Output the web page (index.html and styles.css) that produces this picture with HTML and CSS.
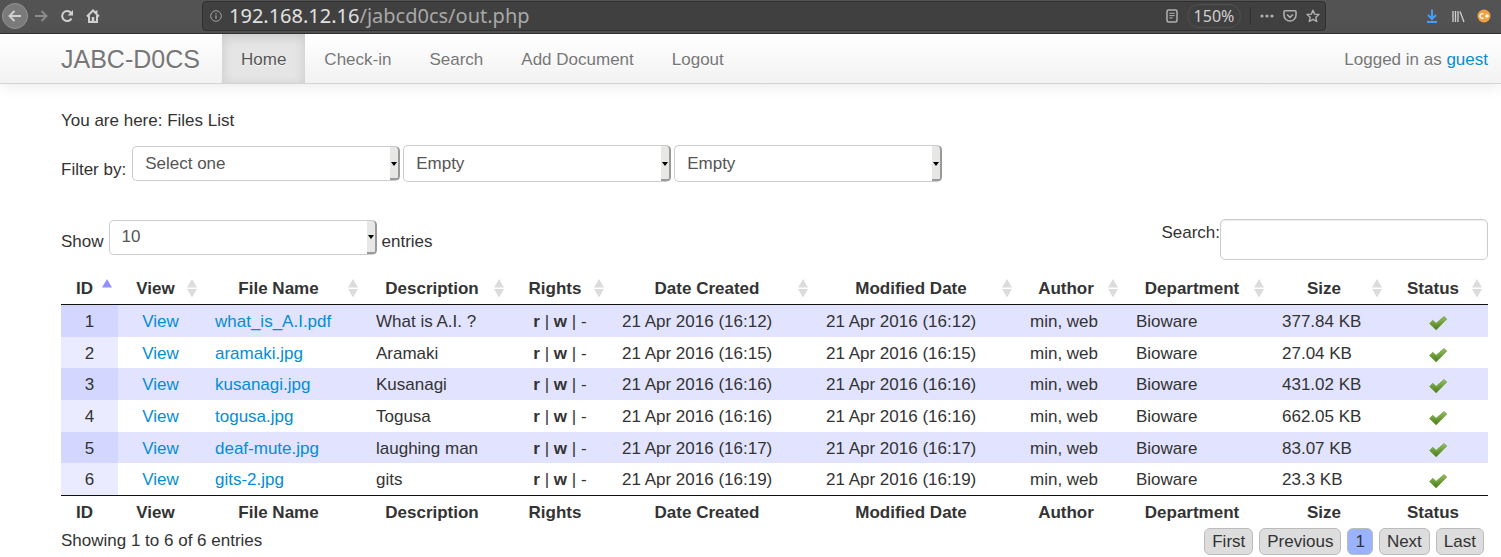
FILE: index.html
```html
<!DOCTYPE html>
<html lang="en">
<head>
<meta charset="utf-8">
<title>JABC-D0CS - Files List</title>
<link rel="stylesheet" href="styles.css">
</head>
<body>
<svg class="defs" aria-hidden="true">
  <defs>
    <linearGradient id="tick-fill" x1="0" y1="0" x2="0" y2="1">
      <stop offset="0" stop-color="#95bf60"/>
      <stop offset="1" stop-color="#487c14"/>
    </linearGradient>
    <symbol id="sort" viewBox="0 0 10 20"><path d="M5 1l5 8.500H0zM5 19.500l5-8.500H0z"/></symbol>
    <symbol id="sort-up" viewBox="0 0 10 20"><path d="M5 1l5 8.500H0z"/></symbol>
    <symbol id="tick" viewBox="0 0 20 16"><path d="M1.500 8.500l3.300-3.200 3.300 3L16 1.500l2.800 2.500L8.200 15z" fill="url(#tick-fill)" stroke="#7ba64a" stroke-width=".8" stroke-linejoin="round"/></symbol>
  </defs>
</svg>

<header class="browser">
  <div class="browser-nav">
    <button class="tool back" aria-label="Back"><svg width="16" height="16" viewBox="0 0 16 16"><path d="M14 8H3M7.500 3L2.500 8l5 5"/></svg></button>
    <button class="tool forward" aria-label="Forward"><svg width="16" height="16" viewBox="0 0 16 16"><path d="M2 8h11M8.500 3l5 5-5 5"/></svg></button>
    <button class="tool" aria-label="Reload"><svg width="14" height="14" viewBox="0 0 14 14"><path d="M11.500 9.500A5 5 0 1 1 11 3.800"/><path d="M13 1v5.500H7.500z" fill="currentColor" stroke="none"/></svg></button>
    <button class="tool" aria-label="Home page"><svg width="14" height="14" viewBox="0 0 14 14"><path d="M1 7.500L7 1.500l6 6M3 6.500V13h8V6.500M10.500 4V1.500"/><path d="M5.700 8h2.600v5H5.700z" fill="currentColor" stroke="none"/></svg></button>
  </div>
  <div class="address">
    <svg class="info-icon" width="12" height="12" viewBox="0 0 12 12"><circle cx="6" cy="6" r="5.300"/><path d="M6 5.200v3.600M6 3v1.200" stroke-width="1.300"/></svg>
    <span class="url"><b>192.168.12.16</b>/jabcd0cs/out.php</span>
    <svg class="reader" width="12" height="14" viewBox="0 0 12 14"><rect x="1" y="1" width="10" height="12" rx="1.500" stroke-width="1.500"/><path d="M3.300 4.300h5.400M3.300 6.600h5.400M3.300 8.900h3.400" stroke-width="1"/></svg>
    <span class="zoom">150%</span>
    <span class="divider"></span>
    <svg width="14" height="14" viewBox="0 0 14 14"><g fill="currentColor" stroke="none"><circle cx="2" cy="7" r="1.600"/><circle cx="7" cy="7" r="1.600"/><circle cx="12" cy="7" r="1.600"/></g></svg>
    <svg width="14" height="14" viewBox="0 0 14 14"><path d="M2 1.800h10q1 0 1 1V6a6 6 0 0 1-12 0V2.800q0-1 1-1zM4 5.500l3 2.800 3-2.800" stroke-width="1.600"/></svg>
    <svg width="14" height="14" viewBox="0 0 14 14"><path d="M7 1.200l1.700 3.900 4.300.4-3.200 2.800.9 4.200L7 10.300l-3.700 2.200.9-4.200L1 5.500l4.300-.4z" stroke-width="1.400" stroke-linejoin="round"/></svg>
  </div>
  <div class="browser-tools">
    <button class="tool download" aria-label="Downloads"><svg width="14" height="14" viewBox="0 0 14 14"><path d="M7 .5v9M3 6l4 4 4-4M2 13h10"/></svg></button>
    <button class="tool" aria-label="Library"><svg width="14" height="14" viewBox="0 0 14 14"><path d="M2 2v11M4.500 2v11M7 2v11M9 2.500L13 13" stroke-width="1.300"/></svg></button>
    <button class="tool" aria-label="Cookies"><svg width="14" height="14" viewBox="0 0 14 14"><circle cx="7" cy="7" r="6.500" fill="#f0a040" stroke="none"/><path d="M6.500 5.300a2.200 2.200 0 1 0 0 3.400M8 7h4M10 5.200v3.600" stroke="#fff" stroke-width="1.300"/></svg></button>
  </div>
</header>

<nav class="navbar">
  <a class="brand" href="#">JABC-D0CS</a>
  <a class="tab active" href="#">Home</a>
  <a class="tab" href="#">Check-in</a>
  <a class="tab" href="#">Search</a>
  <a class="tab" href="#">Add Document</a>
  <a class="tab" href="#">Logout</a>
  <p class="user">Logged in as <a href="#">guest</a></p>
</nav>

<main class="page">
  <p class="crumb">You are here: Files List</p>

  <form class="filters">
    <label for="filter">Filter by:</label>
    <select id="filter" class="picker"><option>Select one</option></select>
    <select class="picker tall" aria-label="Filter field"><option>Empty</option></select>
    <select class="picker tall" aria-label="Filter value"><option>Empty</option></select>
  </form>

  <div class="controls">
    <div class="length">
      <label for="length">Show</label>
      <select id="length" class="picker"><option>10</option></select>
      <span class="after">entries</span>
    </div>
    <div class="search">
      <label for="search">Search:</label><input id="search" type="text">
    </div>
  </div>

  <table class="files">
    <colgroup>
      <col class="c-id"><col class="c-view"><col class="c-name"><col class="c-desc"><col class="c-rights"><col class="c-date"><col class="c-date"><col class="c-author"><col class="c-dept"><col class="c-size"><col class="c-status">
    </colgroup>
    <thead>
      <tr>
        <th>ID<svg class="sort on"><use href="#sort-up"/></svg></th>
        <th>View<svg class="sort"><use href="#sort"/></svg></th>
        <th>File Name<svg class="sort"><use href="#sort"/></svg></th>
        <th>Description<svg class="sort"><use href="#sort"/></svg></th>
        <th>Rights<svg class="sort"><use href="#sort"/></svg></th>
        <th>Date Created<svg class="sort"><use href="#sort"/></svg></th>
        <th>Modified Date<svg class="sort"><use href="#sort"/></svg></th>
        <th>Author<svg class="sort"><use href="#sort"/></svg></th>
        <th>Department<svg class="sort"><use href="#sort"/></svg></th>
        <th>Size<svg class="sort"><use href="#sort"/></svg></th>
        <th>Status<svg class="sort"><use href="#sort"/></svg></th>
      </tr>
    </thead>
    <tbody>
      <tr><td class="mid">1</td><td class="mid"><a href="#">View</a></td><td><a href="#">what_is_A.I.pdf</a></td><td>What is A.I. ?</td><td class="mid"><b>r</b> | <b>w</b> | -</td><td>21 Apr 2016 (16:12)</td><td>21 Apr 2016 (16:12)</td><td>min, web</td><td>Bioware</td><td>377.84 KB</td><td class="mid"><svg class="tick"><use href="#tick"/></svg></td></tr>
      <tr><td class="mid">2</td><td class="mid"><a href="#">View</a></td><td><a href="#">aramaki.jpg</a></td><td>Aramaki</td><td class="mid"><b>r</b> | <b>w</b> | -</td><td>21 Apr 2016 (16:15)</td><td>21 Apr 2016 (16:15)</td><td>min, web</td><td>Bioware</td><td>27.04 KB</td><td class="mid"><svg class="tick"><use href="#tick"/></svg></td></tr>
      <tr><td class="mid">3</td><td class="mid"><a href="#">View</a></td><td><a href="#">kusanagi.jpg</a></td><td>Kusanagi</td><td class="mid"><b>r</b> | <b>w</b> | -</td><td>21 Apr 2016 (16:16)</td><td>21 Apr 2016 (16:16)</td><td>min, web</td><td>Bioware</td><td>431.02 KB</td><td class="mid"><svg class="tick"><use href="#tick"/></svg></td></tr>
      <tr><td class="mid">4</td><td class="mid"><a href="#">View</a></td><td><a href="#">togusa.jpg</a></td><td>Togusa</td><td class="mid"><b>r</b> | <b>w</b> | -</td><td>21 Apr 2016 (16:16)</td><td>21 Apr 2016 (16:16)</td><td>min, web</td><td>Bioware</td><td>662.05 KB</td><td class="mid"><svg class="tick"><use href="#tick"/></svg></td></tr>
      <tr><td class="mid">5</td><td class="mid"><a href="#">View</a></td><td><a href="#">deaf-mute.jpg</a></td><td>laughing man</td><td class="mid"><b>r</b> | <b>w</b> | -</td><td>21 Apr 2016 (16:17)</td><td>21 Apr 2016 (16:17)</td><td>min, web</td><td>Bioware</td><td>83.07 KB</td><td class="mid"><svg class="tick"><use href="#tick"/></svg></td></tr>
      <tr><td class="mid">6</td><td class="mid"><a href="#">View</a></td><td><a href="#">gits-2.jpg</a></td><td>gits</td><td class="mid"><b>r</b> | <b>w</b> | -</td><td>21 Apr 2016 (16:19)</td><td>21 Apr 2016 (16:19)</td><td>min, web</td><td>Bioware</td><td>23.3 KB</td><td class="mid"><svg class="tick"><use href="#tick"/></svg></td></tr>
    </tbody>
    <tfoot>
      <tr><th>ID</th><th>View</th><th>File Name</th><th>Description</th><th>Rights</th><th>Date Created</th><th>Modified Date</th><th>Author</th><th>Department</th><th>Size</th><th>Status</th></tr>
    </tfoot>
  </table>

  <div class="summary">
    <p class="info">Showing 1 to 6 of 6 entries</p>
    <div class="pager">
      <button>First</button>
      <button>Previous</button>
      <button class="current">1</button>
      <button>Next</button>
      <button>Last</button>
    </div>
  </div>
</main>
</body>
</html>
```

FILE: styles.css
```css
* { box-sizing: border-box; }

body {
  margin: 0;
  background: #fff;
  color: #333;
  font: 17px/24px "Liberation Sans", Arial, sans-serif;
}

p { margin: 0; }
a { color: #058dd3; text-decoration: none; }
button, select, input { font: inherit; color: inherit; }

.defs { position: absolute; width: 0; height: 0; }

/* Browser toolbar */
.browser {
  display: flex;
  align-items: center;
  height: 34px;
  padding: 0 4px 2px 2px;
  background: #535353;
  border-bottom: 1px solid #333;
  color: #d0d0d0;
}

.browser svg { display: block; flex: none; fill: none; stroke: currentColor; stroke-width: 2; }

.browser-nav { display: flex; align-items: center; width: 200px; }

.tool {
  display: grid;
  place-items: center;
  width: 26px;
  height: 26px;
  padding: 0;
  border: 0;
  background: none;
}

.back { border: 1px solid #949494; border-radius: 50%; background: #7a7a7a; }
.forward { color: #8b8b8b; }
.download { color: #4a9df5; }

.address {
  display: flex;
  flex: 1;
  align-items: center;
  gap: 9px;
  height: 30px;
  padding: 0 5px 0 7px;
  border: 1px solid #303030;
  border-radius: 4px;
  background: #404040;
  color: #b0b0b0;
}

.address .info-icon { stroke-width: 1; color: #a0a0a0; }

.url {
  flex: 1;
  margin-left: -2px;
  color: #a8a8a8;
  font: 20px/28px "Noto Sans", sans-serif;
}

.url b { color: #e0e0e0; font-weight: 400; }

.zoom {
  width: 54px;
  border: 1px solid #505050;
  border-radius: 12px;
  color: #d0d0d0;
  font: 16px/22px "Noto Sans", sans-serif;
  text-align: center;
}

.divider { width: 1px; height: 18px; background: #303030; }

.browser-tools { display: flex; justify-content: flex-end; width: 171px; }

/* Site navigation */
.navbar {
  display: flex;
  height: 50px;
  padding: 0 13px 0 61px;
  border-bottom: 1px solid #d4d4d4;
  background: linear-gradient(#fff, #f2f2f2);
  box-shadow: 0 1px 15px rgba(0, 0, 0, .1);
  color: #777;
  line-height: 51px;
  text-shadow: 0 1px 0 #fff;
}

.brand { width: 161px; color: #777; font-size: 25px; }
.tab { height: 49px; padding: 0 19px; color: #777; }

.active {
  background: #e5e5e5;
  box-shadow: inset 0 3px 12px rgba(0, 0, 0, .13);
  color: #555;
}

.user { margin-left: auto; }

/* Page */
.page { padding: 25px 13px 0 61px; }

.filters { display: flex; align-items: center; gap: 3px; margin-top: 12px; }
.filters label { padding: 13px 3px 0 0; }

.picker {
  appearance: none;
  width: 268px;
  height: 35px;
  padding: 0 18px 0 12px;
  border: 1px solid #ccc;
  border-right: 2px solid #999;
  border-radius: 5px;
  background:
    url("data:image/svg+xml,%3Csvg xmlns='http://www.w3.org/2000/svg' width='6' height='4'%3E%3Cpath d='M0 0h6L3 4z'/%3E%3C/svg%3E") right 1px center no-repeat,
    linear-gradient(#999, #999) right bottom / 8px 2px no-repeat,
    linear-gradient(#e7e7e5, #e7e7e5) right top / 8px 100% no-repeat,
    #fff;
  color: #555;
}

.tall { height: 37px; }

.controls { display: flex; justify-content: space-between; margin-top: 37px; }
.length { display: flex; align-items: center; gap: 5px; height: 36px; }
.length label, .after { padding-top: 9px; }
.search { display: flex; align-items: flex-start; }
.search label { padding-top: 2px; }

.search input {
  width: 268px;
  height: 41px;
  padding: 0 9px;
  border: 1px solid #ccc;
  border-radius: 5px;
  box-shadow: inset 0 1px 1px rgba(0, 0, 0, .08);
}

/* File table */
.files {
  width: 100%;
  margin-top: 13px;
  border-collapse: separate;
  border-spacing: 0;
  table-layout: fixed;
}

.c-id { width: 57px; }
.c-view { width: 85px; }
.c-name { width: 161px; }
.c-desc { width: 146px; }
.c-rights { width: 100px; }
.c-date { width: 204px; }
.c-author { width: 106px; }
.c-dept { width: 146px; }
.c-size { width: 118px; }
.c-status { width: 100px; }

.files th {
  position: relative;
  height: 32px;
  padding: 0 22px 0 12px;
  font-weight: 700;
  text-align: center;
  white-space: nowrap;
}

.files thead th { border-bottom: 1px solid #111; }
.files tfoot th { height: 33px; padding-top: 1px; border-top: 1px solid #111; }

.sort {
  position: absolute;
  top: 5px;
  right: 6px;
  width: 10px;
  height: 20px;
  fill: #dcdcdc;
}

.sort.on { fill: #9090ff; }

.files td { height: 32px; padding: 2px 12px 0; white-space: nowrap; }
.files tr:nth-child(3n + 2) td { height: 31px; }
.files tbody tr:nth-child(odd) { background: #e2e4ff; }
.files tbody tr:nth-child(odd) td:first-child { background: #d3d6ff; }
.files tbody tr:nth-child(even) td:first-child { background: #eaebff; }
.files .mid { text-align: center; }

.tick { display: block; width: 20px; height: 16px; margin: 2px auto 0; }

.summary { display: flex; justify-content: space-between; }
.info { padding-top: 1px; }
.pager { display: flex; gap: 6px; padding-right: 4px; }

.pager button {
  height: 27px;
  padding: 0 7px;
  border: 1px solid #bbb;
  border-radius: 6px;
  background: #ddd;
}

.pager .current { background: #99b3ff; }
```
